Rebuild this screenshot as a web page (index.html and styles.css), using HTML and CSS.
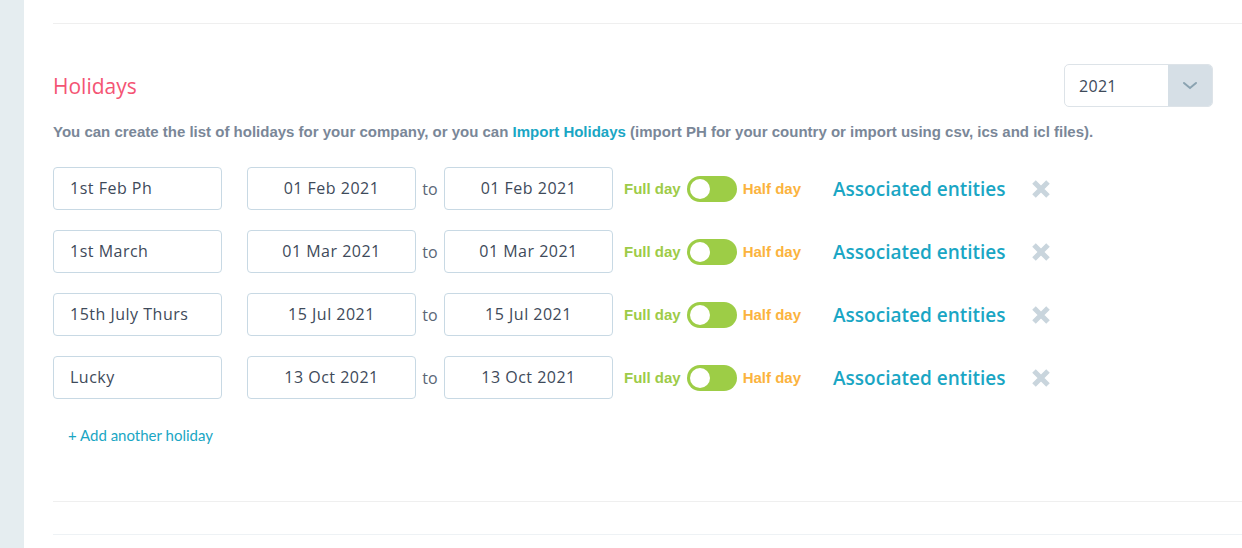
FILE: index.html
```html
<!DOCTYPE html>
<html lang="en">
<head>
    <meta charset="UTF-8">
    <meta name="viewport" content="width=device-width, initial-scale=1.0">
    <title>Holidays</title>
    <link rel="stylesheet" href="styles.css">
</head>
<body>
    <div class="page">
        <aside class="sidebar"></aside>
        <main class="content">
            <div class="divider"></div>

            <section class="holidays">
                <div class="section-head">
                    <h2>Holidays</h2>
                    <div class="year-select">
                        <span class="year-value">2021</span>
                        <span class="year-arrow">
                            <svg width="16" height="10" viewBox="0 0 16 10"><path d="M2 2 L8 7 L14 2" fill="none" stroke="#8ba3b1" stroke-width="2" stroke-linecap="round"/></svg>
                        </span>
                    </div>
                </div>

                <p class="intro">You can create the list of holidays for your company, or you can <a href="#">Import Holidays</a> (import PH for your country or import using csv, ics and icl files).</p>

                <div class="holiday-list">
                    <div class="holiday-row">
                        <div class="field name">1st Feb Ph</div>
                        <div class="field date">01 Feb 2021</div>
                        <span class="to">to</span>
                        <div class="field date">01 Feb 2021</div>
                        <span class="full">Full day</span>
                        <span class="toggle"><span class="knob"></span></span>
                        <span class="half">Half day</span>
                        <a class="entities" href="#">Associated entities</a>
                        <span class="remove"><svg width="22" height="20" viewBox="0 0 22 20"><path d="M4 3 L18 17 M18 3 L4 17" stroke="#c9d5dd" stroke-width="5" stroke-linecap="butt"/></svg></span>
                    </div>
                    <div class="holiday-row">
                        <div class="field name">1st March</div>
                        <div class="field date">01 Mar 2021</div>
                        <span class="to">to</span>
                        <div class="field date">01 Mar 2021</div>
                        <span class="full">Full day</span>
                        <span class="toggle"><span class="knob"></span></span>
                        <span class="half">Half day</span>
                        <a class="entities" href="#">Associated entities</a>
                        <span class="remove"><svg width="22" height="20" viewBox="0 0 22 20"><path d="M4 3 L18 17 M18 3 L4 17" stroke="#c9d5dd" stroke-width="5" stroke-linecap="butt"/></svg></span>
                    </div>
                    <div class="holiday-row">
                        <div class="field name">15th July Thurs</div>
                        <div class="field date">15 Jul 2021</div>
                        <span class="to">to</span>
                        <div class="field date">15 Jul 2021</div>
                        <span class="full">Full day</span>
                        <span class="toggle"><span class="knob"></span></span>
                        <span class="half">Half day</span>
                        <a class="entities" href="#">Associated entities</a>
                        <span class="remove"><svg width="22" height="20" viewBox="0 0 22 20"><path d="M4 3 L18 17 M18 3 L4 17" stroke="#c9d5dd" stroke-width="5" stroke-linecap="butt"/></svg></span>
                    </div>
                    <div class="holiday-row">
                        <div class="field name">Lucky</div>
                        <div class="field date">13 Oct 2021</div>
                        <span class="to">to</span>
                        <div class="field date">13 Oct 2021</div>
                        <span class="full">Full day</span>
                        <span class="toggle"><span class="knob"></span></span>
                        <span class="half">Half day</span>
                        <a class="entities" href="#">Associated entities</a>
                        <span class="remove"><svg width="22" height="20" viewBox="0 0 22 20"><path d="M4 3 L18 17 M18 3 L4 17" stroke="#c9d5dd" stroke-width="5" stroke-linecap="butt"/></svg></span>
                    </div>
                </div>

                <a class="add-link" href="#">+ Add another holiday</a>
            </section>

            <div class="divider"></div>
            <div class="divider second"></div>
        </main>
    </div>
</body>
</html>
```

FILE: styles.css
```css
body {
    margin: 0;
    font-family: "Open Sans", sans-serif;
    background: #fff;
}
.page {
    display: flex;
    min-height: 548px;
}
.sidebar {
    width: 24px;
    flex-shrink: 0;
    background-color: #e5edf0;
}
.content {
    flex: 1;
    padding: 23px 0 0 29px;
}
.divider {
    height: 1px;
    background-color: #efefef;
}
.divider.second {
    margin-top: 32px;
    background-color: #eef2f5;
}
.holidays {
    padding: 40px 29px 55px 0;
}
.section-head {
    display: flex;
    justify-content: space-between;
    align-items: center;
}
.section-head h2 {
    margin: 0;
    font-size: 21px;
    font-weight: 400;
    color: #f45474;
}
.year-select {
    display: flex;
    width: 149px;
    height: 43px;
    border: 1px solid #dde3e8;
    border-radius: 5px;
    overflow: hidden;
    box-sizing: border-box;
}
.year-value {
    flex: 1;
    padding-left: 14px;
    line-height: 42px;
    font-size: 16px;
    letter-spacing: 0.3px;
    color: #3e4a5a;
}
.year-arrow {
    width: 44px;
    background-color: #d6dfe6;
    display: flex;
    justify-content: center;
    align-items: center;
}
.intro {
    margin: 16px 0 0;
    font-family: "Liberation Sans", Arial, sans-serif;
    font-size: 15px;
    font-weight: bold;
    color: #7a8798;
}
.intro a {
    color: #1aa6c4;
    text-decoration: none;
}
.holiday-list {
    margin-top: 27px;
    display: flex;
    flex-direction: column;
    gap: 20px;
}
.holiday-row {
    display: flex;
    align-items: center;
    height: 43px;
}
.field {
    height: 43px;
    box-sizing: border-box;
    border: 1px solid #c8d9e4;
    border-radius: 4px;
    line-height: 41px;
    font-size: 16px;
    letter-spacing: 0.5px;
    color: #3e4a5a;
}
.field.name {
    width: 169px;
    padding-left: 16px;
    margin-right: 25px;
}
.field.date {
    width: 169px;
    text-align: center;
}
.to {
    width: 28px;
    text-align: center;
    font-size: 16px;
    color: #5a6676;
}
.full, .half {
    font-family: "Liberation Sans", Arial, sans-serif;
    font-size: 15px;
    font-weight: bold;
}
.full {
    margin-left: 11px;
    color: #9dcb48;
}
.half {
    color: #fbb33e;
}
.toggle {
    width: 50px;
    height: 26px;
    margin: 0 6px;
    border-radius: 13px;
    background-color: #9dcd46;
    box-sizing: border-box;
    padding: 3px;
    display: flex;
}
.knob {
    width: 20px;
    height: 20px;
    border-radius: 50%;
    background-color: #fff;
}
.entities {
    margin-left: 32px;
    font-size: 19px;
    font-weight: 600;
    color: #1aa6c4;
    text-decoration: none;
}
.remove {
    margin-left: 24px;
    display: flex;
}
.add-link {
    display: inline-block;
    margin: 27px 0 0 15px;
    font-family: Lato, sans-serif;
    font-size: 15px;
    color: #1aa6c4;
    text-decoration: none;
}
```
